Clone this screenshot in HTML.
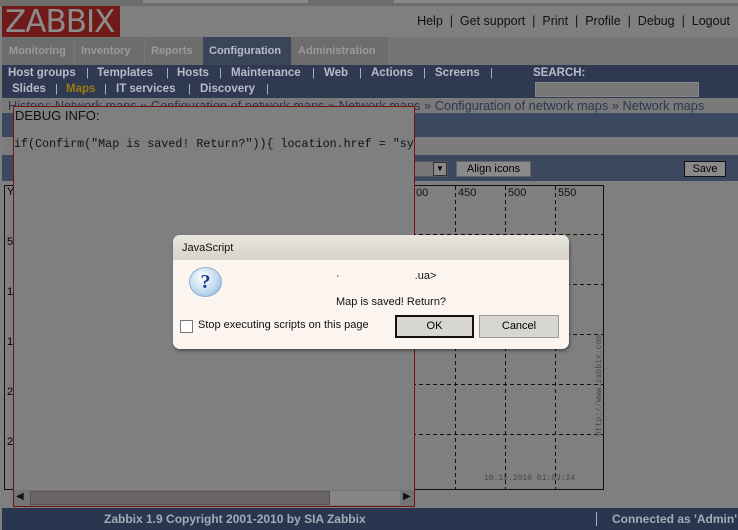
<!DOCTYPE html>
<html><head><style>
body{margin:0;width:738px;height:530px;overflow:hidden;background:#7f7f7f;font-family:"Liberation Sans","DejaVu Sans",sans-serif;position:relative}
div,span{position:absolute;box-sizing:border-box}
.t{white-space:nowrap}
.nav{font:bold 11.5px "Liberation Sans",sans-serif;color:#b8bcc8;white-space:nowrap}
.tab{font:bold 11px "Liberation Sans",sans-serif;color:#9a9a9a;white-space:nowrap;top:45px}
.sep{font:11px "Liberation Sans",sans-serif;color:#b8bcc8}
</style></head><body>
<div style="left:0;top:0;width:738px;height:6px;background:#6d6d6b"></div>
<div style="left:143px;top:0;width:165px;height:3px;background:#8a8a8a"></div>
<div style="left:394px;top:0;width:344px;height:3px;background:#8a8a8a"></div>
<div style="left:2px;top:6px;width:118px;height:31px;background:#701a1a"></div>
<div class="t" style="left:5px;top:4px;font:31px 'DejaVu Sans',sans-serif;color:#8c8c8c;letter-spacing:-1px">ZABBIX</div>
<div class="t" style="right:8px;top:14px;font:12.5px 'Liberation Sans',sans-serif;color:#111">Help &nbsp;| &nbsp;Get support &nbsp;| &nbsp;Print &nbsp;| &nbsp;Profile &nbsp;| &nbsp;Debug &nbsp;| &nbsp;Logout</div>
<div style="left:2px;top:37px;width:736px;height:28px;background:#757575"></div>
<div style="left:2px;top:37px;width:386px;height:28px;background:#6d6d6d"></div>
<div style="left:74px;top:37px;width:1px;height:28px;background:#777"></div>
<div style="left:144px;top:37px;width:1px;height:28px;background:#777"></div>
<div style="left:203px;top:37px;width:88px;height:28px;background:#3b4558"></div>
<div class="tab" style="left:9px">Monitoring</div>
<div class="tab" style="left:81px">Inventory</div>
<div class="tab" style="left:151px">Reports</div>
<div class="tab" style="left:209px;color:#b8bcc8">Configuration</div>
<div class="tab" style="left:298px">Administration</div>
<div style="left:2px;top:65px;width:736px;height:33px;background:#2f3a52"></div>
<div class="nav" style="left:8px;top:67px">Host groups</div><div class="sep" style="left:86px;top:67px">|</div>
<div class="nav" style="left:97px;top:67px">Templates</div><div class="sep" style="left:166px;top:67px">|</div>
<div class="nav" style="left:177px;top:67px">Hosts</div><div class="sep" style="left:219px;top:67px">|</div>
<div class="nav" style="left:231px;top:67px">Maintenance</div><div class="sep" style="left:312px;top:67px">|</div>
<div class="nav" style="left:324px;top:67px">Web</div><div class="sep" style="left:359px;top:67px">|</div>
<div class="nav" style="left:371px;top:67px">Actions</div><div class="sep" style="left:423px;top:67px">|</div>
<div class="nav" style="left:435px;top:67px">Screens</div><div class="sep" style="left:490px;top:67px">|</div>
<div class="nav" style="left:533px;top:67px">SEARCH:</div>
<div style="left:535px;top:82px;width:164px;height:15px;background:#777;border:1px solid #888"></div>
<div class="nav" style="left:12px;top:83px">Slides</div><div class="sep" style="left:55px;top:83px">|</div>
<div class="nav" style="left:66px;top:83px;color:#9a7a10">Maps</div><div class="sep" style="left:104px;top:83px">|</div>
<div class="nav" style="left:116px;top:83px">IT services</div><div class="sep" style="left:188px;top:83px">|</div>
<div class="nav" style="left:200px;top:83px">Discovery</div><div class="sep" style="left:266px;top:83px">|</div>
<div style="left:2px;top:98px;width:736px;height:15px;background:#7a7a7a"></div>
<div class="t" style="left:8px;top:98px;font:12.8px 'Liberation Sans',sans-serif;color:#2e3650">History: Network maps » Configuration of network maps » Network maps » Configuration of network maps » Network maps</div>
<div style="left:2px;top:113px;width:736px;height:24px;background:#3c4760"></div>
<div style="left:2px;top:137px;width:736px;height:18px;background:#7c7c7c"></div>
<div style="left:2px;top:155px;width:736px;height:26px;background:#3c4760"></div>
<div style="left:410px;top:161px;width:38px;height:16px;background:#777;border:1px solid #555"></div>
<div style="left:433px;top:162px;width:14px;height:14px;background:#8a8a8a;border:1px solid #333;font-size:8px;text-align:center;line-height:12px">▼</div>
<div class="t" style="left:456px;top:161px;width:75px;height:16px;background:#8a8a8a;border:1px solid #666;font:11px 'Liberation Sans',sans-serif;text-align:center;line-height:14px">Align icons</div>
<div class="t" style="left:684px;top:161px;width:42px;height:16px;background:#8a8a8a;border:1px solid #111;font:11px 'Liberation Sans',sans-serif;text-align:center;line-height:14px">Save</div>
<div style="left:4px;top:185px;width:600px;height:305px;border:1px solid #111"></div>
<svg style="position:absolute;left:0;top:0" width="738" height="530">
<g stroke="#111" stroke-dasharray="4,3" stroke-width="1">
<line x1="455.5" y1="186" x2="455.5" y2="490"/><line x1="505.5" y1="186" x2="505.5" y2="490"/><line x1="555.5" y1="186" x2="555.5" y2="490"/>
<line x1="405" y1="234.5" x2="604" y2="234.5"/><line x1="405" y1="284.5" x2="604" y2="284.5"/><line x1="405" y1="334.5" x2="604" y2="334.5"/><line x1="405" y1="384.5" x2="604" y2="384.5"/><line x1="405" y1="434.5" x2="604" y2="434.5"/>
</g>
<text x="416" y="196" font-family="Liberation Sans" font-size="11" fill="#111">00</text>
<text x="458" y="196" font-family="Liberation Sans" font-size="11" fill="#111">450</text>
<text x="508" y="196" font-family="Liberation Sans" font-size="11" fill="#111">500</text>
<text x="558" y="196" font-family="Liberation Sans" font-size="11" fill="#111">550</text>
<text x="484" y="480" font-family="Liberation Mono" font-size="8" fill="#444">10.15.2010 01:03:24</text>
<text transform="translate(601,436) rotate(-90)" font-family="Liberation Mono" font-size="8" fill="#444">http://www.zabbix.com</text>
</svg>
<div style="left:13px;top:106px;width:402px;height:401px;border:1px solid #7a1010;background:#7f7f7f"></div>
<div class="t" style="left:15px;top:108px;font:13px 'Liberation Sans',sans-serif;color:#111">DEBUG INFO:</div>
<div class="t" style="left:14px;top:137px;width:400px;overflow:hidden;font:11.7px 'Liberation Mono',monospace;color:#111">if(Confirm("Map is saved! Return?")){ location.href = "sysmaps.php"}</div>
<div style="left:14px;top:490px;width:400px;height:16px;background:#747474"></div>
<div style="left:30px;top:491px;width:300px;height:14px;background:#6a6464;border:1px solid #555"></div>
<div style="left:330px;top:491px;width:70px;height:14px;background:#858585"></div>
<div class="t" style="left:16px;top:491px;font-size:10px;color:#111">◀</div>
<div class="t" style="left:403px;top:491px;font-size:10px;color:#111">▶</div>
<div style="left:4px;top:186px;width:10px;height:300px"><span style="left:3px;top:0;font-size:11px">Y</span><span style="left:3px;top:50px;font-size:11px">5</span><span style="left:3px;top:100px;font-size:11px">1</span><span style="left:3px;top:150px;font-size:11px">1</span><span style="left:3px;top:200px;font-size:11px">2</span><span style="left:3px;top:250px;font-size:11px">2</span></div>
<div style="left:2px;top:508px;width:736px;height:22px;background:#2a3550"></div>
<div class="t" style="left:104px;top:512px;font:bold 12px 'Liberation Sans',sans-serif;color:#a5abb8">Zabbix 1.9 Copyright 2001-2010 by SIA Zabbix</div>
<div style="left:596px;top:512px;width:1px;height:14px;background:#a5abb8"></div>
<div class="t" style="left:612px;top:512px;font:bold 12px 'Liberation Sans',sans-serif;color:#a5abb8">Connected as 'Admin'</div>
<div style="left:173px;top:235px;width:396px;height:114px;border-radius:7px;background:#fcf4ef;box-shadow:1px 2px 3px rgba(0,0,0,.4);overflow:hidden">
<div style="left:0;top:0;width:396px;height:25px;background:linear-gradient(#e9e6de,#d6d2c9)"></div>
<span class="t" style="left:9px;top:7px;font-size:11px;color:#111">JavaScript</span>
<div style="left:16px;top:32px;width:33px;height:30px;border-radius:50%;background:radial-gradient(circle at 40% 35%,#fff,#bcd6ee 60%,#7aa4cc);border:1px solid #8fb0d0;font:bold 20px 'Liberation Serif',serif;color:#1a3a8a;text-align:center;line-height:28px">?</div>
<span class="t" style="left:163px;top:35px;font-size:11px;color:#111">·<span style="position:static;display:inline-block;width:75px"></span>.ua&gt;</span>
<span class="t" style="left:163px;top:61px;font-size:11px;color:#111">Map is saved! Return?</span>
<div style="left:7px;top:85px;width:13px;height:13px;border:1px solid #777;background:#fff"></div>
<span class="t" style="left:25px;top:84px;font-size:11px;color:#111">Stop executing scripts on this page</span>
<div style="left:222px;top:80px;width:79px;height:23px;background:#d8d6d0;border:2px solid #111;font-size:11px;text-align:center;line-height:19px">OK</div>
<div style="left:306px;top:80px;width:80px;height:23px;background:#d8d6d0;border:1px solid #999;font-size:11px;text-align:center;line-height:21px">Cancel</div>
</div>
</body></html>
